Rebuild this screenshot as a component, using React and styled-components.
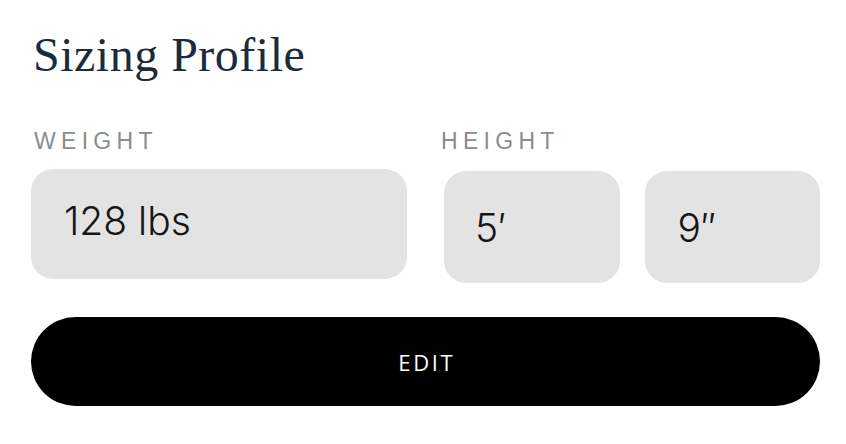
import React from "react";
import styled, { createGlobalStyle } from "styled-components";

const Global = createGlobalStyle`
  html, body { margin: 0; padding: 0; background: #ffffff; }
  * { box-sizing: border-box; }
`;

const Card = styled.section`
  width: 846px;
  height: 444px;
  padding: 27px 26px 0 31px;
  background: #ffffff;
  display: flex;
  flex-direction: column;
`;

const Title = styled.h1`
  margin: 0 0 44px 2px;
  font-family: "Liberation Serif", "Times New Roman", serif;
  font-weight: 400;
  font-size: 48px;
  line-height: 56px;
  letter-spacing: 0.5px;
  color: #1c2b3a;
`;

const Fields = styled.div`
  display: grid;
  grid-template-columns: 1fr 1fr;
  column-gap: 37px;
`;

const Group = styled.div`
  display: flex;
  flex-direction: column;
`;

const Label = styled.div`
  font-family: "Liberation Sans", Arial, sans-serif;
  font-size: 23px;
  line-height: 28px;
  letter-spacing: 5.3px;
  color: #8c8c8c;
  margin: 0 0 ${(p) => p.$gap}px ${(p) => p.$shift}px;
`;

const Boxes = styled.div`
  display: grid;
  grid-template-columns: ${(p) => (p.$count === 2 ? "1fr 1fr" : "1fr")};
  column-gap: 25px;
`;

const ValueBox = styled.div`
  height: ${(p) => p.$h}px;
  background: #e3e3e3;
  border-radius: 22px;
  display: flex;
  align-items: center;
  padding: 0 0 ${(p) => p.$lift}px ${(p) => p.$indent}px;
  font-family: "Inter", "Liberation Sans", sans-serif;
  font-weight: 300;
  font-size: 39px;
  color: #161616;
`;

const EditButton = styled.button`
  margin-top: 34px;
  height: 89px;
  width: 100%;
  border: none;
  border-radius: 45px;
  background: #000000;
  color: #ffffff;
  font-family: "Open Sans", "Liberation Sans", sans-serif;
  font-weight: 500;
  font-size: 22px;
  letter-spacing: 2.6px;
  padding: 0 0 0 2.6px;
  cursor: pointer;
`;

export default function App() {
  return (
    <>
      <Global />
      <Card>
        <Title>Sizing Profile</Title>
        <Fields>
          <Group>
            <Label $gap={14} $shift={3}>WEIGHT</Label>
            <Boxes $count={1}>
              <ValueBox $h={110} $indent={33} $lift={8}>128 lbs</ValueBox>
            </Boxes>
          </Group>
          <Group>
            <Label $gap={16} $shift={-3}>HEIGHT</Label>
            <Boxes $count={2}>
              <ValueBox $h={112} $indent={31} $lift={0}>5′</ValueBox>
              <ValueBox $h={112} $indent={33} $lift={0}>9″</ValueBox>
            </Boxes>
          </Group>
        </Fields>
        <EditButton>EDIT</EditButton>
      </Card>
    </>
  );
}
